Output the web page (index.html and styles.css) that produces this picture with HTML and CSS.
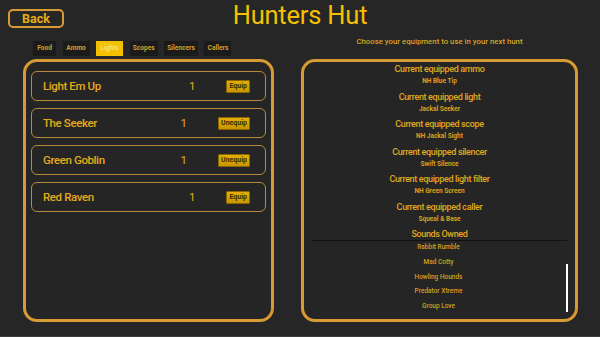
FILE: index.html
```html
<!DOCTYPE html>
<html>
<head>
<meta charset="utf-8">
<link rel="stylesheet" href="styles.css">
</head>
<body>
<div class="app">
  <header class="header">
    <div class="header-left"><button class="back">Back</button></div>
    <h1 class="title">Hunters Hut</h1>
    <div class="header-right"></div>
  </header>
  <div class="subbar">
    <nav class="tabs">
      <span class="tab tab-short">Food</span>
      <span class="tab">Ammo</span>
      <span class="tab active">Lights</span>
      <span class="tab">Scopes</span>
      <span class="tab">Silencers</span>
      <span class="tab">Callers</span>
    </nav>
    <div class="hint">Choose your equipment to use in your next hunt</div>
  </div>
  <main class="main">
    <section class="panel left">
      <div class="item"><span class="name">Light Em Up</span><span class="count">1</span><button class="btn">Equip</button></div>
      <div class="item"><span class="name">The Seeker</span><span class="count">1</span><button class="btn">Unequip</button></div>
      <div class="item"><span class="name">Green Goblin</span><span class="count">1</span><button class="btn">Unequip</button></div>
      <div class="item"><span class="name">Red Raven</span><span class="count">1</span><button class="btn">Equip</button></div>
    </section>
    <section class="panel right">
      <div class="equipped">
        <div class="eq"><div class="eq-h">Current equipped ammo</div><div class="eq-v">NH Blue Tip</div></div>
        <div class="eq"><div class="eq-h">Current equipped light</div><div class="eq-v">Jackal Seeker</div></div>
        <div class="eq"><div class="eq-h">Current equipped scope</div><div class="eq-v">NH Jackal Sight</div></div>
        <div class="eq"><div class="eq-h">Current equipped silencer</div><div class="eq-v">Swift Silence</div></div>
        <div class="eq"><div class="eq-h">Current equipped light filter</div><div class="eq-v">NH Green Screen</div></div>
        <div class="eq"><div class="eq-h">Current equipped caller</div><div class="eq-v">Squeal &amp; Base</div></div>
        <div class="eq-h sounds-h">Sounds Owned</div>
      </div>
      <div class="sounds">
        <div class="sound">Rabbit Rumble</div>
        <div class="sound">Mad Cotty</div>
        <div class="sound">Howling Hounds</div>
        <div class="sound">Predator Xtreme</div>
        <div class="sound">Group Love</div>
        <div class="scrollbar"></div>
      </div>
    </section>
  </main>
</div>
</body>
</html>
```
FILE: styles.css
```css
* { box-sizing: border-box; }
html, body { margin: 0; padding: 0; }
body {
  width: 600px;
  height: 337px;
  background: #262626;
  font-family: Roboto, "Liberation Sans", sans-serif;
  overflow: hidden;
}
.app {
  height: 337px;
  display: flex;
  flex-direction: column;
  border-bottom: 1px solid #3e3e3e;
}
.header {
  display: grid;
  grid-template-columns: 1fr auto 1fr;
  height: 41px;
}
.header-left { padding: 8px 0 0 8px; }
.back {
  width: 56px;
  height: 19px;
  background: #262626;
  border: 2px solid #d69b34;
  border-radius: 5px;
  color: #e6ad14;
  font-family: Roboto, sans-serif;
  font-weight: 700;
  font-size: 12.5px;
  padding: 0;
  line-height: 15px;
}
.title {
  margin: 0;
  padding-top: 1px;
  font-weight: 400;
  font-size: 25.5px;
  letter-spacing: -0.2px;
  line-height: 28px;
  color: #f5c000;
}
.subbar {
  display: flex;
  height: 18px;
  align-items: flex-start;
}
.tabs {
  display: flex;
  gap: 6.6px;
  padding-left: 33px;
  width: 301px;
}
.tab {
  height: 15px;
  line-height: 15px;
  min-width: 27px;
  padding: 0 3px;
  text-align: center;
  background: #1b1b1b;
  color: #cfa02c;
  font-size: 6.6px;
  font-weight: 700;
}
.tab-short { min-width: 23px; }
.tab.active {
  background: #f3c100;
  color: #fbe27a;
}
.hint {
  width: 277px;
  text-align: center;
  color: #d6a422;
  font-size: 7.8px;
  font-weight: 500;
  line-height: 10px;
  margin-top: -4px;
}
.main {
  display: flex;
  gap: 27px;
  padding-left: 23px;
  height: 263px;
}
.panel {
  border: 3px solid #d89b33;
  border-radius: 14px;
  background: #252525;
  height: 263px;
}
.left {
  width: 251px;
  padding: 9px 5px;
  display: flex;
  flex-direction: column;
  gap: 7px;
}
.item {
  height: 30px;
  border: 1.5px solid #b88b3c;
  border-radius: 6px;
  display: flex;
  align-items: center;
  padding: 0 15px 0 11px;
  color: #e3ab1a;
}
.name {
  flex: 1;
  font-size: 11.5px;
  letter-spacing: -0.4px;
  font-weight: 500;
}
.count {
  font-size: 11.5px;
  margin-right: 31px;
}
.btn {
  height: 13px;
  padding: 0 2px;
  background: linear-gradient(#e2ae05, #c99600);
  border: 1px solid #8a6600;
  border-radius: 1px;
  color: #3d2c00;
  font-family: Roboto, sans-serif;
  font-weight: 700;
  font-size: 7px;
  line-height: 11px;
}
.right {
  width: 277px;
  position: relative;
  display: flex;
  flex-direction: column;
  padding: 1px 5px 0 5px;
  color: #e0a91e;
  text-align: center;
}
.eq { height: 27.5px; }
.eq-h {
  font-size: 9px;
  letter-spacing: -0.35px;
  font-weight: 500;
  line-height: 12px;
}
.eq-v {
  font-size: 6.5px;
  font-weight: 700;
  line-height: 12px;
  color: #d8a31c;
}
.sounds-h {
  height: 12px;
}
.sounds {
  border-top: 1px solid #111;
  margin: 0 3px 0 3px;
  padding-top: 2px;
  position: relative;
  height: 78px;
}
.sound {
  font-size: 6.5px;
  font-weight: 500;
  color: #d4a020;
  line-height: 9px;
  margin-bottom: 5.8px;
  padding-right: 2px;
}
.scrollbar {
  position: absolute;
  right: -1px;
  top: 23px;
  width: 2px;
  height: 48px;
  background: #ffffff;
}
```
